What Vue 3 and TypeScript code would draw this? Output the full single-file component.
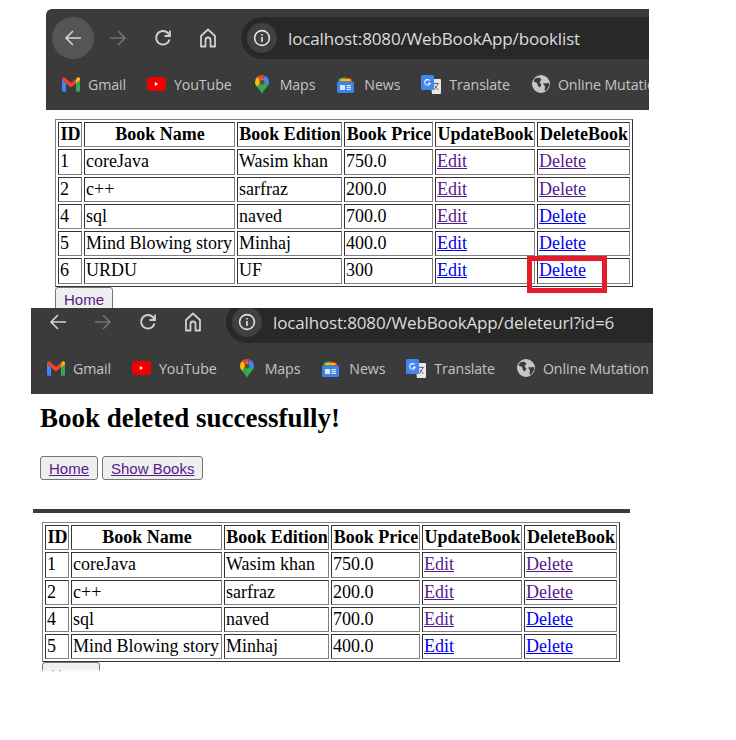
<script setup lang="ts">
interface Book {
  id: number;
  name: string;
  edition: string;
  price: string;
  editSeen: boolean;
  deleteSeen: boolean;
}

const allBooks: Book[] = [
  { id: 1, name: "coreJava", edition: "Wasim khan", price: "750.0", editSeen: true, deleteSeen: true },
  { id: 2, name: "c++", edition: "sarfraz", price: "200.0", editSeen: true, deleteSeen: true },
  { id: 4, name: "sql", edition: "naved", price: "700.0", editSeen: true, deleteSeen: false },
  { id: 5, name: "Mind Blowing story", edition: "Minhaj", price: "400.0", editSeen: false, deleteSeen: false },
  { id: 6, name: "URDU", edition: "UF", price: "300", editSeen: false, deleteSeen: false },
];

const pages = [
  { key: "list", path: "/WebBookApp/booklist", books: allBooks, deleted: false },
  { key: "deleted", path: "/WebBookApp/deleteurl?id=6", books: allBooks.slice(0, 4), deleted: true },
];
</script>

<template>
  <main class="page">
    <section v-for="page in pages" :key="page.key" class="capture" :class="{ 'capture--deleted': page.deleted }">
      <header class="toolbar">
        <div class="nav">
          <button class="nav-btn nav-btn--active" aria-label="Back">
            <svg width="18" height="18" viewBox="0 0 18 18" fill="none" stroke="#d5d5d5" stroke-width="1.6">
              <path d="M17 9H2M9 2 2 9l7 7" />
            </svg>
          </button>
          <button class="nav-btn" aria-label="Forward">
            <svg width="18" height="18" viewBox="0 0 18 18" fill="none" stroke="#737373" stroke-width="1.6">
              <path d="M1 9h15M9 2l7 7-7 7" />
            </svg>
          </button>
          <button class="nav-btn" aria-label="Reload">
            <svg width="18" height="18" viewBox="0 0 18 18" fill="none" stroke="#d0d0d0" stroke-width="2">
              <path d="M15.500 10.500A6.800 6.800 0 1 1 13.800 4L15.500 6" />
              <path d="M16 1.500V7h-5.500" stroke-width="1.800" />
            </svg>
          </button>
          <button class="nav-btn" aria-label="Home">
            <svg width="18" height="20" viewBox="0 0 18 20" fill="none" stroke="#cfcfcf" stroke-width="1.800">
              <path d="M9 1.500 2 8v10.500h4.500V12a2.500 2.500 0 0 1 5 0v6.500H16V8z" stroke-linejoin="round" />
            </svg>
          </button>
          <div class="omnibox">
            <span class="site-info">
              <svg width="18" height="18" viewBox="0 0 18 18" fill="none" stroke="#e2e2e2" stroke-width="1.600">
                <circle cx="9" cy="9" r="7.400" />
                <path d="M9 8v5M9 5v1.600" />
              </svg>
            </span>
            <span class="url">localhost:8080{{ page.path }}</span>
          </div>
        </div>
        <nav class="bookmarks">
          <a class="bookmark">
            <svg width="18" height="15" viewBox="0 0 19 15" preserveAspectRatio="none">
              <path d="M0 2.500V13.500A1.200 1.200 0 0 0 1.200 14.700H4.200V6.500z" fill="#4285f4" />
              <path d="M19 2.500V13.500A1.200 1.200 0 0 1 17.800 14.700H14.800V6.500z" fill="#34a853" />
              <path d="M0 2.200C0 .6 1.800-.2 3 .7L9.500 5.700 16 .7C17.200-.2 19 .6 19 2.200L14.800 6.500 9.500 10.500 4.200 6.500z" fill="#ea4335" />
              <path d="M14.800 3.600 16 .7C17.200-.2 19 .6 19 2.200V3L14.800 6.500z" fill="#fbbc04" />
            </svg>
            Gmail
          </a>
          <a class="bookmark">
            <svg width="19" height="14" viewBox="0 0 19 14">
              <rect width="19" height="14" rx="4" fill="#f00000" />
              <path d="M7.800 5v4l3.400-2z" fill="#fff" />
            </svg>
            YouTube
          </a>
          <a class="bookmark bookmark--maps">
            <svg width="14" height="19" viewBox="0 0 14 19">
              <path d="M7 19C5.500 14.500 0 11.500 0 7h14c0 4.500-5.500 7.500-7 12z" fill="#34a853" />
              <path d="M2 2.100A7 7 0 0 0 0 7c0 1.800.9 3.200 2 4.600L9 3.500z" fill="#fbbc04" />
              <path d="M2 2.100A7 7 0 0 1 7 0c1 0 2 .2 2.900.7L5 5.600z" fill="#ea4335" />
              <path d="M9.900.7A7 7 0 0 1 14 7c0 .8-.2 1.500-.4 2.200L7 7z" fill="#4285f4" />
              <circle cx="7" cy="7" r="2.500" fill="#5f4b32" />
            </svg>
            Maps
          </a>
          <a class="bookmark bookmark--news">
            <svg width="17" height="17" viewBox="0 0 17 17">
              <path d="M1 6 2 2.500 8 1l1 5z" fill="#34a853" />
              <path d="M7 6 8 1.500 14 2.500 15.500 6z" fill="#ea4335" />
              <path d="M3 5 4 3h9l1 2z" fill="#fbbc04" />
              <rect y="5.500" width="17" height="11.500" rx="1.500" fill="#3f83e8" />
              <rect x="3" y="9" width="5" height="5" fill="#dbe8fb" />
              <path d="M9.500 9h4.500v1.200H9.500zM9.500 11h4.500v1.200H9.500zM9.500 13h4.500v1H9.500z" fill="#dbe8fb" />
            </svg>
            News
          </a>
          <a class="bookmark">
            <svg width="20" height="19" viewBox="0 0 20 19">
              <path d="M9 4h10a1 1 0 0 1 1 1v13a1 1 0 0 1-1 1h-8z" fill="#e8e8e8" />
              <path d="M12 8.500h6M15 7.500v1M13 15l4-6M13.500 10.500l4 4.500" stroke="#6f6f6f" stroke-width="1" fill="none" />
              <rect width="13" height="15" rx="1.500" fill="#4285f4" />
              <path d="M8.600 5.500A2.800 2.800 0 1 0 9.200 8.200H6.800" stroke="#fff" stroke-width="1.100" fill="none" />
            </svg>
            Translate
          </a>
          <a class="bookmark bookmark--globe">
            <svg width="18" height="18" viewBox="0 0 18 18">
              <circle cx="9" cy="9" r="9" fill="#c6c6c6" />
              <path d="M3 3.500 7 2.500 9.500 4.500 7.500 7.500 9.500 9.500 7.800 12.500 6 11 5 8 1.500 6.500zM11 8.500l5.800-.5.600 2.500L14 16l-1.500-1 .5-3.500z" fill="#3b3b3b" />
            </svg>
            Online Mutation
          </a>
        </nav>
      </header>

      <div v-if="page.deleted" class="message">
        <h2 class="message-title">Book deleted successfully!</h2>
        <div class="message-actions">
          <button class="action"><a class="seen">Home</a></button>
          <button class="action"><a class="seen">Show Books</a></button>
        </div>
      </div>
      <hr v-if="page.deleted" class="divider" />

      <div class="results">
        <table class="books">
          <thead>
            <tr>
              <th class="col-id">ID</th>
              <th class="col-name">Book Name</th>
              <th class="col-edition">Book Edition</th>
              <th class="col-price">Book Price</th>
              <th class="col-update">UpdateBook</th>
              <th class="col-delete">DeleteBook</th>
            </tr>
          </thead>
          <tbody>
            <tr v-for="book in page.books" :key="book.id">
              <td>{{ book.id }}</td>
              <td>{{ book.name }}</td>
              <td>{{ book.edition }}</td>
              <td>{{ book.price }}</td>
              <td><a class="link" :class="{ seen: book.editSeen }">Edit</a></td>
              <td><a class="link" :class="{ seen: book.deleteSeen }">Delete</a></td>
            </tr>
          </tbody>
        </table>
        <div v-if="!page.deleted" class="highlight"></div>
        <div class="home-clip">
          <button class="action action--home">Home</button>
        </div>
      </div>
    </section>
  </main>
</template>

<style scoped>
.page {
  width: 736px;
  height: 740px;
  padding-top: 9px;
  box-sizing: border-box;
  background: #fff;
  overflow: hidden;
}

.toolbar {
  margin-left: 46px;
  width: 603px;
  height: 101px;
  padding: 8px 0 0 6px;
  box-sizing: border-box;
  background: #3b3b3b;
  border-top-left-radius: 6px;
  overflow: hidden;
}

.nav {
  display: flex;
  align-items: center;
  gap: 3px;
  height: 42px;
  margin-right: -30px;
}

.nav-btn {
  display: flex;
  align-items: center;
  justify-content: center;
  flex: none;
  width: 42px;
  height: 42px;
  padding: 0;
  border: none;
  border-radius: 50%;
  background: none;
}

.nav-btn--active {
  background: #555;
}

.omnibox {
  display: flex;
  align-items: center;
  flex: 1;
  height: 42px;
  margin-left: 9px;
  padding-left: 6px;
  border-radius: 21px;
  background: #282828;
}

.site-info {
  display: flex;
  align-items: center;
  justify-content: center;
  width: 30px;
  height: 30px;
  border-radius: 50%;
  background: #404040;
}

.url {
  margin-left: 11px;
  color: #dcdcdc;
  font: 17px "Open Sans", sans-serif;
  letter-spacing: -0.15px;
  white-space: nowrap;
}

.bookmarks {
  display: flex;
  align-items: center;
  gap: 21px;
  height: 34px;
  margin-top: 8px;
  padding-left: 10px;
  white-space: nowrap;
}

.bookmark {
  display: flex;
  align-items: center;
  gap: 8px;
  color: #c4c4c4;
  font: 14.200px "Open Sans", sans-serif;
  letter-spacing: -0.1px;
}

.bookmark--maps {
  gap: 11px;
}

.bookmark--maps svg {
  margin-left: 2px;
}

.bookmark--news {
  gap: 10px;
}

.bookmark--news svg,
.bookmark--globe svg {
  margin-left: 1px;
}

.results {
  position: relative;
  margin: 9px 0 0 55px;
}

.books {
  table-layout: fixed;
  width: 578px;
  border-collapse: separate;
  border-spacing: 2px;
  border: 1px solid;
  border-color: #808080 #333 #333 #808080;
  color: #000;
  font: 18px "Liberation Serif", serif;
}

.books th,
.books td {
  height: 25px;
  padding: 1px;
  box-sizing: border-box;
  border: 1px solid;
  border-color: #333 #808080 #808080 #333;
  line-height: 21px;
  vertical-align: top;
  white-space: nowrap;
}

.books th {
  padding: 1px 0 0 1px;
}

.books td {
  text-align: left;
}

.books tbody tr:first-child td,
.books tbody tr:nth-child(5) td {
  height: 26px;
}

.col-id { width: 24px; }
.col-name { width: 151px; }
.col-edition { width: 105px; }
.col-price { width: 89px; }
.col-update { width: 100px; }
.col-delete { width: 93px; }

.link {
  color: #0000ee;
  text-decoration: underline;
}

.seen {
  color: #551a8b;
  text-decoration: underline;
}

.highlight {
  position: absolute;
  left: 472px;
  top: 137px;
  width: 80px;
  height: 37px;
  box-sizing: border-box;
  border: 5px solid #e31b2b;
}

.home-clip {
  height: 21px;
  overflow: hidden;
}

.action {
  height: 24px;
  padding: 0 8px;
  border: 1px solid #767676;
  border-radius: 3px;
  background: #efefef;
  color: #000;
  font: 15px "Liberation Sans", sans-serif;
}

.action--home {
  display: block;
  width: 58px;
  height: 24px;
  color: #551a8b;
}

.capture--deleted .toolbar {
  margin-left: 31px;
  width: 622px;
  height: 86px;
  padding: 0 0 0 6px;
  border-radius: 0;
}

.capture--deleted .nav {
  margin-top: -7px;
  margin-right: 0;
}

.capture--deleted .nav-btn--active {
  background: none;
}

.capture--deleted .omnibox {
  border-radius: 21px 0 0 21px;
}

.message {
  margin-left: 40px;
}

.message-title {
  margin: 10px 0 0;
  color: #000;
  font: bold 27px/29px "Liberation Serif", serif;
}

.message-actions {
  display: flex;
  gap: 4px;
  margin-top: 23px;
}

.divider {
  width: 597px;
  height: 4px;
  margin: 29px 0 0 33px;
  border: none;
  background: #3b3b3b;
}

.capture--deleted .results {
  margin: 9px 0 0 42px;
}

.capture--deleted .home-clip {
  height: 10px;
  mask-image: linear-gradient(#000 70%, transparent);
}
</style>

<style>
html,
body {
  margin: 0;
  background: #fff;
}
</style>
